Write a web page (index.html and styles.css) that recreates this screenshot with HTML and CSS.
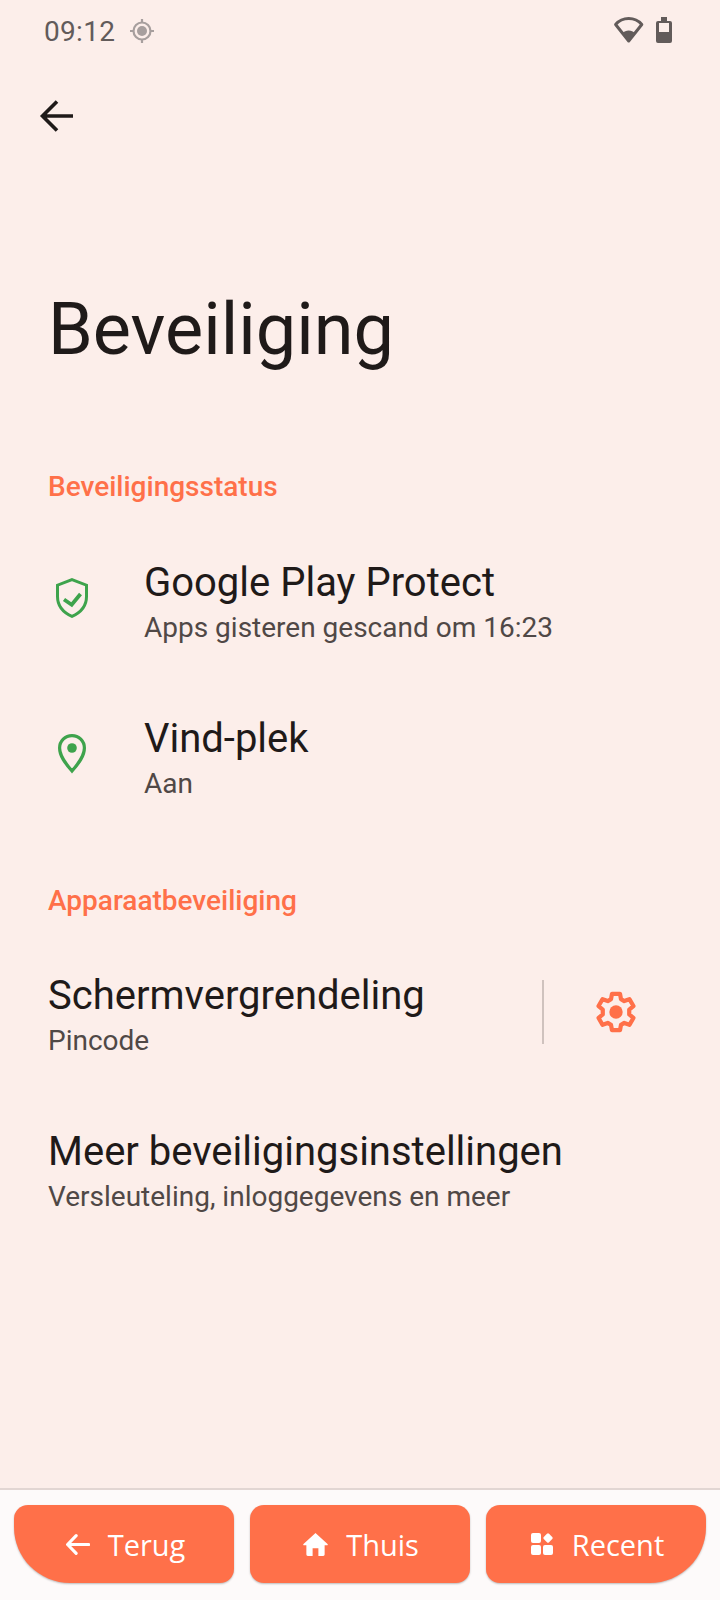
FILE: index.html
```html
<!DOCTYPE html>
<html lang="nl">
<head>
  <meta charset="UTF-8" />
  <meta name="viewport" content="width=device-width, initial-scale=1.0"/>
  <title>Beveiliging</title>
  <link rel="stylesheet" href="styles.css">
</head>
<body>
  <div class="screen">
    <div class="statusbar">
      <div class="status-left">
        <span class="time">09:12</span>
        <svg class="gps" width="24" height="24" viewBox="0 0 24 24">
          <circle cx="12" cy="12" r="8.500" fill="none" stroke="#a79f9e" stroke-width="2.200"/>
          <circle cx="12" cy="12" r="5" fill="#a79f9e"/>
          <path d="M12 0v4M12 20v4M0 12h4M20 12h4" stroke="#a79f9e" stroke-width="2.200" fill="none"/>
        </svg>
      </div>
      <div class="status-right">
        <svg width="32" height="28" viewBox="0 0 32 28">
          <path d="M3.600 7.500C7 3.500 11.500 1.500 16.700 1.500s9.700 2 13.100 6L16.700 24Z" fill="none" stroke="#625b5a" stroke-width="3" stroke-linejoin="round"/>
          <path d="M10.500 16C12 14.500 14.300 13.500 16.700 13.500s4.700 1 6.200 2.500L16.700 24Z" fill="#625b5a"/>
        </svg>
        <svg width="18" height="28" viewBox="0 0 18 28">
          <path d="M6 0h6v4h3a2 2 0 0 1 2 2v18a2 2 0 0 1-2 2H3a2 2 0 0 1-2-2V6a2 2 0 0 1 2-2h3Z" fill="#625b5a"/>
          <rect x="4" y="6" width="10" height="9" fill="#fceeea"/>
        </svg>
      </div>
    </div>

    <div class="toolbar">
      <svg width="36" height="36" viewBox="0 0 36 36">
        <path d="M34 18H4M18 3.500 3.500 18 18 32.500" fill="none" stroke="#1f1a19" stroke-width="3.600"/>
      </svg>
    </div>

    <h1 class="title">Beveiliging</h1>

    <div class="section-head first">Beveiligingsstatus</div>

    <div class="row">
      <div class="row-icon">
        <svg width="32" height="40" viewBox="0 0 32 40">
          <path d="M16 1.600 30.500 7.200v11.300c0 9.200-5.800 16-14.500 19.900C7.300 34.500 1.500 27.700 1.500 18.500V7.200Z" fill="none" stroke="#3ea34c" stroke-width="3"/>
          <path d="M8 21.500l7.700 5.300L24.500 16" fill="none" stroke="#3ea34c" stroke-width="3.800"/>
        </svg>
      </div>
      <div class="row-text">
        <div class="row-title">Google Play Protect</div>
        <div class="row-sub">Apps gisteren gescand om 16:23</div>
      </div>
    </div>

    <div class="row">
      <div class="row-icon">
        <svg width="28" height="40" viewBox="0 0 28 40">
          <path d="M14 37C7 29 1.600 22 1.600 14A12.400 12.400 0 0 1 26.400 14C26.400 22 21 29 14 37Z" fill="none" stroke="#3ea34c" stroke-width="3.200"/>
          <circle cx="14" cy="14" r="4.800" fill="#3ea34c"/>
        </svg>
      </div>
      <div class="row-text">
        <div class="row-title">Vind-plek</div>
        <div class="row-sub">Aan</div>
      </div>
    </div>

    <div class="section-head second">Apparaatbeveiliging</div>

    <div class="row split">
      <div class="row-text">
        <div class="row-title">Schermvergrendeling</div>
        <div class="row-sub">Pincode</div>
      </div>
      <div class="divider"></div>
      <div class="gear">
        <svg width="46" height="46" viewBox="0 0 24 24">
          <path d="M9.900 2.500h4.200l.5 2.800 1.700 1 2.700-1 2.100 3.600-2.200 1.800v2.600l2.200 1.800-2.100 3.600-2.700-1-1.700 1-.5 2.800H9.900l-.5-2.800-1.700-1-2.700 1-2.100-3.600 2.200-1.800v-2.600L2.900 8.900 5 5.300l2.700 1 1.700-1Z" fill="none" stroke="#ff7049" stroke-width="2.200" stroke-linejoin="round"/>
          <circle cx="12" cy="12" r="3.500" fill="#ff7049"/>
        </svg>
      </div>
    </div>

    <div class="row">
      <div class="row-text">
        <div class="row-title">Meer beveiligingsinstellingen</div>
        <div class="row-sub">Versleuteling, inloggegevens en meer</div>
      </div>
    </div>

    <div class="spacer"></div>

    <div class="navbar">
      <div class="nav-btn left">
        <svg width="25" height="25" viewBox="0 0 24 24">
          <path d="M22.700 12H2.500M10.700 3.500 2.500 12l8.200 8.500" fill="none" stroke="#fff" stroke-width="3" stroke-linecap="round" stroke-linejoin="round"/>
        </svg>
        <span>Terug</span>
      </div>
      <div class="nav-btn">
        <svg width="25" height="25" viewBox="1 1 26 26">
          <path d="M14 2 1.500 13.500a.8.8 0 0 0 .6 1.400H4.500v9.600a1.500 1.500 0 0 0 1.500 1.500h5V18h6v8h5a1.500 1.500 0 0 0 1.500-1.500v-9.600h2.400a.8.800 0 0 0 .6-1.400Z" fill="#fff"/>
        </svg>
        <span>Thuis</span>
      </div>
      <div class="nav-btn right">
        <svg width="24" height="24" viewBox="0 0 24 24">
          <rect x="1" y="1" width="10" height="10" rx="2" fill="#fff"/>
          <rect x="1" y="13" width="10" height="10" rx="2" fill="#fff"/>
          <rect x="13" y="13" width="10" height="10" rx="2" fill="#fff"/>
          <rect x="14.250" y="2.250" width="7.500" height="7.500" rx="1.500" fill="#fff" transform="rotate(45 18 6)"/>
        </svg>
        <span>Recent</span>
      </div>
    </div>
  </div>
</body>
</html>
```

FILE: styles.css
```css
* {
  margin: 0;
  padding: 0;
  box-sizing: border-box;
}

html, body {
  height: 100%;
  background: #fceeea;
  font-family: Roboto, sans-serif;
  color: #1f1a19;
}

.screen {
  display: flex;
  flex-direction: column;
  height: 1600px;
  width: 720px;
}

.statusbar {
  display: flex;
  justify-content: space-between;
  align-items: center;
  height: 62px;
  padding: 0 47px 0 44px;
}

.status-left {
  display: flex;
  align-items: center;
  gap: 15px;
}

.status-right {
  display: flex;
  align-items: center;
  gap: 11px;
}

.time {
  font-size: 28px;
  letter-spacing: 0.3px;
  color: #625b5a;
}

.toolbar {
  height: 112px;
  padding: 36px 0 0 39px;
}

.title {
  font-size: 72px;
  font-weight: 400;
  line-height: 84px;
  padding-left: 48px;
  margin-top: 114px;
}

.section-head {
  font-size: 28px;
  font-weight: 500;
  line-height: 34px;
  color: #ff7049;
  padding-left: 48px;
}

.section-head.first {
  margin-top: 98px;
  margin-bottom: 21px;
}

.section-head.second {
  margin-top: 47px;
  margin-bottom: 20px;
}

.row {
  display: flex;
  align-items: center;
  height: 156px;
  padding: 0 32px 0 48px;
}

.row-icon {
  width: 48px;
  margin: 0 48px 10px 0;
  display: flex;
  justify-content: center;
}

.row-title {
  font-size: 40px;
  line-height: 50px;
}

.row-sub {
  font-size: 28px;
  line-height: 40px;
  color: #504846;
}

.row.split .row-text {
  flex: 1;
}

.divider {
  width: 2px;
  height: 64px;
  background: #cfc2be;
  margin-bottom: 8px;
}

.gear {
  width: 144px;
  margin-bottom: 8px;
  display: flex;
  justify-content: center;
}

.spacer {
  flex: 1;
}

.navbar {
  display: flex;
  gap: 16px;
  height: 112px;
  padding: 15px 14px 0;
  background: #fdfafa;
  border-top: 2px solid #e2d6d3;
}

.nav-btn {
  flex: 1;
  height: 78px;
  padding-left: 2px;
  display: flex;
  align-items: center;
  justify-content: center;
  gap: 18px;
  background: #ff7049;
  border-radius: 14px;
  color: #fff;
  font-family: "Open Sans", sans-serif;
  font-size: 29px;
  font-weight: 500;
  box-shadow: 0 1px 2px rgba(0, 0, 0, 0.25);
}

.nav-btn.left {
  border-bottom-left-radius: 56px;
}

.nav-btn.right {
  border-bottom-right-radius: 56px;
}
```
